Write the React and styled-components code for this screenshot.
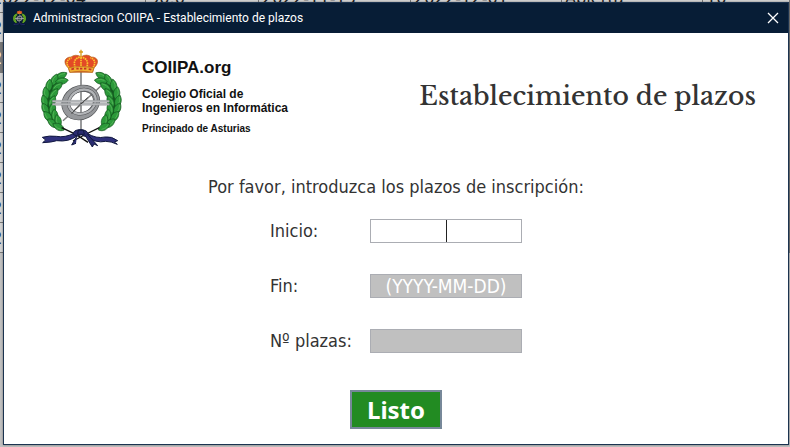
import React from "react";
import styled, { createGlobalStyle } from "styled-components";

const GlobalStyle = createGlobalStyle`
  * { box-sizing: border-box; }
  body { margin: 0; background: #c8c8c8; }
`;

const uiFont = `"DejaVu Sans Condensed", "DejaVu Sans", sans-serif`;

const Desktop = styled.div`
  position: relative;
  min-height: 100vh;
  overflow: hidden;
`;

const Backdrop = styled.div`
  position: absolute;
  inset: 0;
  overflow: hidden;
  background: #c0c0c0;
`;

const Records = styled.table`
  width: calc(100% + 12px);
  margin: -18px 0 0 -12px;
  border-collapse: collapse;
  table-layout: fixed;
  font: 18px/20px ${uiFont};
`;

const Column = styled.col`
  width: ${(p) => p.$width};
`;

const Record = styled.tr`
  height: 30px;
  background: ${(p) => (p.$selected ? "#777" : "#d2d2d2")};
  color: ${(p) => (p.$selected ? "#fff" : "#222")};
`;

const Cell = styled.td`
  padding: 0 3px;
  border: 1px solid #777;
  white-space: nowrap;
`;

const Dialog = styled.section`
  position: absolute;
  inset: 2px 1px 2px 3px;
  display: flex;
  flex-direction: column;
  background: #fff;
  border: 1px solid #1b3350;
  box-shadow: 0 0 2px rgba(0, 0, 0, 0.4);
`;

const TitleBar = styled.header`
  display: flex;
  align-items: center;
  flex: none;
  height: 30px;
  padding: 0 7px 0 8px;
  gap: 6px;
  background: #071d36;
  color: #fff;
`;

const WindowTitle = styled.span`
  flex: 1;
  font: 12px/16px Roboto, "Open Sans", sans-serif;
`;

const CloseButton = styled.button`
  display: flex;
  padding: 2px;
  border: 0;
  background: none;
  color: #fff;
`;

const Banner = styled.div`
  display: flex;
  justify-content: space-between;
  align-items: flex-start;
  padding: 16px 32px 0 34px;
`;

const Brand = styled.div`
  display: flex;
  gap: 18px;
`;

const BrandText = styled.div`
  padding-top: 9px;
  font-family: "Liberation Sans", Arial, sans-serif;
  font-weight: bold;
  color: #111;
`;

const BrandName = styled.p`
  margin: 0 0 9px;
  font-size: 17px;
  line-height: 20px;
`;

const BrandLine = styled.p`
  margin: 0 0 7px;
  font-size: 12px;
  line-height: 14px;
`;

const BrandRegion = styled.p`
  margin: 0;
  font-size: 10px;
  line-height: 14px;
`;

const Heading = styled.h1`
  margin: 30px 0 0;
  font: 500 25px/36px "Libre Baskerville", Baskerville, "Liberation Serif", serif;
  color: #333;
`;

const Form = styled.form`
  display: flex;
  flex-direction: column;
  align-items: center;
  padding-top: 25px;
  font-family: ${uiFont};
  color: #333;
`;

const Prompt = styled.p`
  margin: 0 0 20px;
  font-size: 18px;
  line-height: 24px;
`;

const Fields = styled.div`
  display: grid;
  gap: 31px;
`;

const Field = styled.div`
  display: grid;
  grid-template-columns: 100px 152px;
  align-items: center;
`;

const Label = styled.label`
  font-size: 18px;
  line-height: 24px;
`;

const TextBox = styled.input`
  width: 100%;
  height: 24px;
  padding: 0 4px;
  border: 1px solid #abadb3;
  border-radius: 0;
  outline: 0;
  background: ${(p) =>
    p.$active
      ? "linear-gradient(#222, #222) center / 1px 100% no-repeat #fff"
      : "#c0c0c0"};
  color: ${(p) => (p.$active ? "#333" : "#fff")};
  caret-color: transparent;
  font: 19px/22px ${uiFont};
  text-align: center;

  &::placeholder {
    color: #fff;
    opacity: 1;
  }
`;

const SubmitButton = styled.button`
  width: 92px;
  height: 39px;
  margin-top: 37px;
  padding: 0;
  border: 2px solid #778899;
  background: #228b22;
  color: #fff;
  font: bold 24px/34px "Noto Sans", "Open Sans", sans-serif;
`;

const EmblemSvg = styled.svg`
  flex: none;
  width: ${(p) => p.$width}px;
  height: ${(p) => p.$height}px;
`;

const LEAVES = [
  [96, 108, 62], [76, 120, 25], [98, 123, 82], [60, 137, 8], [84, 141, 52],
  [51, 160, -8], [74, 162, 36], [47, 184, -16], [69, 185, 25], [49, 207, -26],
  [70, 207, 10], [57, 230, -38], [77, 227, -4], [71, 250, -50], [87, 243, -14],
  [89, 261, -62],
];

function Branch({ mirrored, simple }) {
  const leaf = simple ? "#77bd25" : "#2c9a3a";
  const shade = simple ? "#4b7d1e" : "#14591f";
  return (
    <g transform={mirrored ? "translate(314 0) scale(-1 1)" : undefined}>
      <path
        d="M106 103C70 105 44 140 42 182C42 222 62 252 98 267L88 235C74 205 74 160 90 140Z"
        fill={shade}
      />
      {LEAVES.map(([x, y, angle]) => (
        <g key={`${x}-${y}`} transform={`translate(${x} ${y}) rotate(${angle})`}>
          <path d="M0-20C14-8 12 10 0 19C-12 10-13-7 0-20Z" fill={leaf} stroke={shade} strokeWidth="2" />
          <path d="M-1-14Q-7-2-3 10" fill="none" stroke="#5fb95f" strokeWidth="2" />
        </g>
      ))}
    </g>
  );
}

function Emblem({ width, height, simple }) {
  return (
    <EmblemSvg $width={width} $height={height} viewBox="27 27 258 303" aria-hidden="true">
      <path d="M156 91V278" stroke="#77797b" strokeWidth="6" />
      <path d="M156 91V278" stroke="#bbb" strokeWidth="3" />
      <path d="M102 242L223 131" stroke="#666" strokeWidth="4" />
      <path d="M102 241L223 130" stroke="#bbb" strokeWidth="2" />
      <Branch simple={simple} />
      <Branch mirrored simple={simple} />
      <g fill="none" transform="rotate(-28 156 187)">
        <ellipse cx="155" cy="187" rx="49" ry="41" stroke="#55575a" strokeWidth="21" />
        <ellipse cx="155" cy="187" rx="49" ry="41" stroke="#96989b" strokeWidth="17" />
        <ellipse cx="160" cy="187" rx="42" ry="35" stroke="#505255" strokeWidth="10" />
        <ellipse cx="160" cy="187" rx="42" ry="35" stroke="#b3b5b8" strokeWidth="7" />
      </g>
      <path d="M70 181H241V187H70ZM70 190H241V196H70Z" fill="#b8babc" stroke="#77797b" strokeWidth="1" />
      <path d="M128 221L158 188M156 192L176 173" stroke="#444" strokeWidth="3" />
      <path d="M156 29V51M150 36H162" stroke="#d79c19" strokeWidth="4" />
      <path d="M118 84C100 67 108 51 126 51Q139 41 156 50Q174 40 187 51C207 51 213 67 195 84L191 97H122Z" fill="#e34a26" stroke="#b86a1c" strokeWidth="2" />
      <path d="M120 83C108 68 116 58 128 53M139 83C132 66 138 53 155 51C174 54 179 66 173 83M192 83C202 67 196 57 184 53M156 52V84" fill="none" stroke="#fbc52d" strokeWidth="5" strokeDasharray="5 2" />
      <path d="M118 83Q156 75 195 83L190 97Q156 90 123 97Z" fill="#f0b033" stroke="#b86a1c" strokeWidth="2" />
      <path d="M127 88L135 86M142 86H149M153 86H160M165 86H172M179 87L187 89" stroke="#c83225" strokeWidth="5" />
      <path d="M98 263L142 284L177 307M211 263L172 282L132 303" fill="none" stroke="#111" strokeWidth="4" />
      <path d="M137 279Q108 294 82 289Q62 286 40 292L50 300L41 308Q69 307 83 302Q119 307 145 287M174 280Q202 297 228 291Q248 288 266 302L256 306L265 313Q246 304 230 304Q200 311 168 287" fill="#30317c" stroke="#11183f" strokeWidth="3" />
      <path d="M133 284Q131 269 155 269Q176 270 178 283L167 289Q157 280 146 288ZM148 270H163L166 283H146Z" fill="#292b70" stroke="#11183f" strokeWidth="3" />
      <path d="M144 288L128 315L141 310M168 286L190 321L195 312L206 317Q191 300 176 283" fill="#292b70" stroke="#11183f" strokeWidth="3" />
    </EmblemSvg>
  );
}

const columns = ["157px", "113px", "152px", "151px", "141px", "auto"];
const records = [
  ["2022-12-04", "90.0", "2022-11-15", "2022-12-01", "Abierta", "10"],
  ...Array.from({ length: 8 }, () => ["2022-12-04", "", "", "", "", ""]),
];

export default function App() {
  return (
    <>
      <GlobalStyle />
      <Desktop>
        <Backdrop aria-hidden="true">
          <Records>
            <colgroup>
              {columns.map((width, i) => <Column key={i} $width={width} />)}
            </colgroup>
            <tbody>
              {records.map((record, row) => (
                <Record key={row} $selected={row === 2}>
                  {record.map((value, i) => <Cell key={i}>{value}</Cell>)}
                </Record>
              ))}
            </tbody>
          </Records>
        </Backdrop>
        <Dialog role="dialog" aria-labelledby="window-title">
          <TitleBar>
            <Emblem width={15} height={16} simple />
            <WindowTitle id="window-title">Administracion COIIPA - Establecimiento de plazos</WindowTitle>
            <CloseButton type="button" aria-label="Cerrar">
              <svg width="12" height="12" viewBox="0 0 12 12" aria-hidden="true">
                <path d="M1 1L11 11M11 1L1 11" stroke="currentColor" strokeWidth="1.3" />
              </svg>
            </CloseButton>
          </TitleBar>
          <Banner>
            <Brand>
              <Emblem width={86} height={101} />
              <BrandText>
                <BrandName>COIIPA.org</BrandName>
                <BrandLine>Colegio Oficial de<br />Ingenieros en Informática</BrandLine>
                <BrandRegion>Principado de Asturias</BrandRegion>
              </BrandText>
            </Brand>
            <Heading>Establecimiento de plazos</Heading>
          </Banner>
          <Form onSubmit={(e) => e.preventDefault()}>
            <Prompt>Por favor, introduzca los plazos de inscripción:</Prompt>
            <Fields>
              <Field>
                <Label htmlFor="inicio">Inicio:</Label>
                <TextBox id="inicio" type="text" $active />
              </Field>
              <Field>
                <Label htmlFor="fin">Fin:</Label>
                <TextBox id="fin" type="text" placeholder="(YYYY-MM-DD)" />
              </Field>
              <Field>
                <Label htmlFor="plazas">Nº plazas:</Label>
                <TextBox id="plazas" type="text" />
              </Field>
            </Fields>
            <SubmitButton type="submit">Listo</SubmitButton>
          </Form>
        </Dialog>
      </Desktop>
    </>
  );
}
